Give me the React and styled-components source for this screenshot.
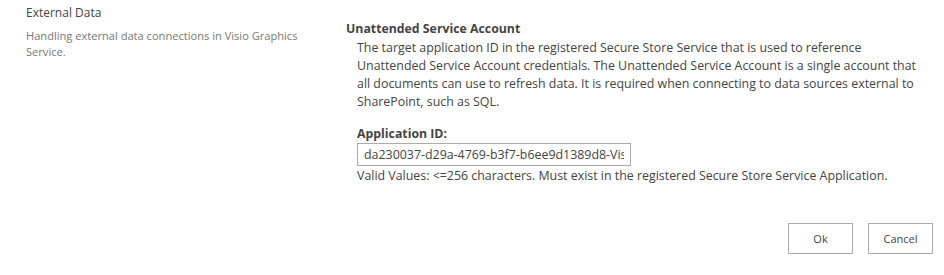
import React from "react";
import styled, { createGlobalStyle } from "styled-components";

const Global = createGlobalStyle`
  html, body { margin: 0; padding: 0; background: #fff; }
  body { font-family: "Open Sans", "Noto Sans", sans-serif; color: #444; }
`;

const Page = styled.div`
  width: 944px;
  height: 275px;
  display: flex;
  flex-direction: column;
  box-sizing: border-box;
`;

const Row = styled.div`
  display: flex;
  align-items: flex-start;
`;

const SideColumn = styled.div`
  width: 290px;
  padding: 5px 0 0 26px;
  flex-shrink: 0;
`;

const SideTitle = styled.div`
  font-size: 12px;
  line-height: 16px;
  color: #444;
`;

const SideDesc = styled.div`
  margin-top: 7px;
  font-size: 11.1px;
  line-height: 16px;
  color: #777;
`;

const MainColumn = styled.div`
  margin-left: 30px;
  padding-top: 20px;
  width: 572px;
`;

const Heading = styled.div`
  font-size: 12.3px;
  font-weight: 700;
  line-height: 18px;
  color: #444;
`;

const Body = styled.div`
  padding-left: 11px;
`;

const Para = styled.p`
  margin: 0;
  font-size: 12.4px;
  line-height: 18px;
  color: #444;
  padding-top: 1px;
`;

const FieldLabel = styled.div`
  margin-top: 14px;
  font-size: 12.3px;
  font-weight: 700;
  line-height: 18px;
`;

const TextInput = styled.input`
  display: block;
  box-sizing: border-box;
  width: 274px;
  height: 23px;
  margin: 0;
  padding: 0 6px;
  border: 1px solid #ababab;
  font-family: inherit;
  font-size: 12.4px;
  color: #444;
  outline: none;
`;

const Hint = styled.div`
  font-size: 12.4px;
  line-height: 18px;
  padding-top: 1px;
`;

const Actions = styled.div`
  display: flex;
  justify-content: flex-end;
  gap: 15px;
  padding: 0 11px 0 0;
  margin-top: 38px;
`;

const Button = styled.button`
  width: 65px;
  height: 31px;
  box-sizing: border-box;
  border: 1px solid #ababab;
  background: #fff;
  font-family: inherit;
  font-size: 11px;
  color: #444;
  padding: 0;
`;

export default function App() {
  return (
    <Page>
      <Global />
      <Row>
        <SideColumn>
          <SideTitle>External Data</SideTitle>
          <SideDesc>Handling external data connections in Visio Graphics Service.</SideDesc>
        </SideColumn>
        <MainColumn>
          <Heading>Unattended Service Account</Heading>
          <Body>
            <Para>
              The target application ID in the registered Secure Store Service that is used to reference
              Unattended Service Account credentials. The Unattended Service Account is a single account that
              all documents can use to refresh data. It is required when connecting to data sources external to
              SharePoint, such as SQL.
            </Para>
            <FieldLabel>Application ID:</FieldLabel>
            <TextInput defaultValue="da230037-d29a-4769-b3f7-b6ee9d1389d8-Visio" />
            <Hint>Valid Values: &lt;=256 characters. Must exist in the registered Secure Store Service Application.</Hint>
          </Body>
        </MainColumn>
      </Row>
      <Actions>
        <Button>Ok</Button>
        <Button>Cancel</Button>
      </Actions>
    </Page>
  );
}
